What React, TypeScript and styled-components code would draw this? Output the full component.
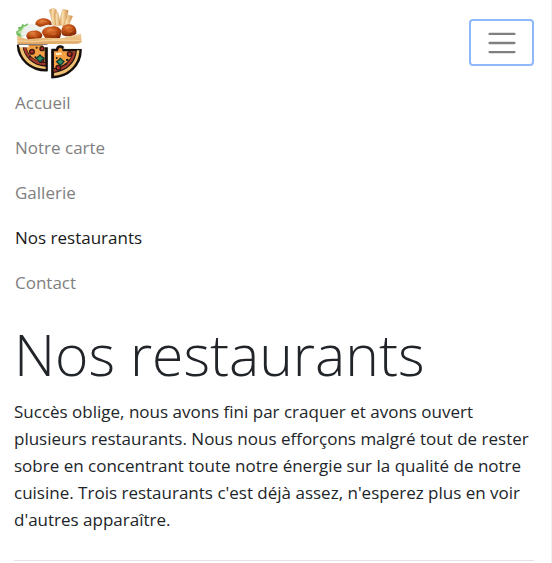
import React, { useState } from "react";
import styled, { createGlobalStyle } from "styled-components";

const GlobalStyle = createGlobalStyle`
  *, *::before, *::after { box-sizing: border-box; }
  body {
    margin: 0;
    background: #fff;
    color: #212529;
    font-family: "Segoe UI", "Open Sans", sans-serif;
    font-size: 17px;
    font-weight: 400;
    line-height: 27px;
  }
`;

const Page = styled.div`
  min-height: 100vh;
  border-right: 1px solid #f0f0f0;
`;

const Navbar = styled.nav`
  display: flex;
  flex-wrap: wrap;
  align-items: flex-start;
  justify-content: space-between;
  padding: 8px 17px 9px 15px;
`;

const Brand = styled.a`
  display: block;
  height: 72px;
`;

const Toggler = styled.button`
  display: flex;
  align-items: center;
  justify-content: center;
  width: 65px;
  height: 47px;
  margin-top: 11px;
  padding: 0;
  background: transparent;
  border: 2px solid #8fb8fa;
  border-radius: 4px;
  cursor: pointer;
`;

const Menu = styled.ul`
  flex-basis: 100%;
  margin: 0;
  padding: 0;
  list-style: none;
`;

const MenuLink = styled.a<{ $active?: boolean }>`
  display: block;
  padding: 9px 0;
  color: ${(p) => (p.$active ? "#191919" : "#808080")};
  text-decoration: none;
`;

const Content = styled.main`
  padding: 0 17px 0 14px;
`;

const Title = styled.h1`
  margin: 0 0 3px;
  font-size: 57px;
  font-weight: 300;
  line-height: 81px;
`;

const Lead = styled.p`
  margin: 0;
`;

const Divider = styled.hr`
  margin: 27px 0;
  border: 0;
  border-top: 1px solid #e3e3e3;
`;

const links = ["Accueil", "Notre carte", "Gallerie", "Nos restaurants", "Contact"];

const Logo = () => (
  <svg width="70" height="72" viewBox="21 25 210 216" role="img" aria-label="Accueil">
    <defs>
      <radialGradient id="ball" cx=".4" cy=".3" r=".75">
        <stop offset="0" stopColor="#e27a38" />
        <stop offset=".55" stopColor="#b9480f" />
        <stop offset="1" stopColor="#742407" />
      </radialGradient>
      <linearGradient id="stick" x1="0" x2="1">
        <stop offset="0" stopColor="#d9974f" />
        <stop offset=".4" stopColor="#f8dfae" />
        <stop offset="1" stopColor="#cf8b43" />
      </linearGradient>
      <linearGradient id="tray" x1="0" x2="0" y1="0" y2="1">
        <stop offset="0" stopColor="#f3d199" />
        <stop offset="1" stopColor="#dfa461" />
      </linearGradient>
    </defs>
    <g fill="url(#stick)" stroke="#d19a5c" strokeWidth="1">
      <path d="M124 30l12-4 9 4 4 45-14 3z" />
      <path d="M163 29l18 3-9 47-20-3z" />
      <path d="M138 42l12-4 8 38-14 3z" />
      <path d="M180 47l14 2-15 36-16-3z" />
    </g>
    <path d="M24 96l8-5-2-9 10-1 2-8 8 3 9-5 3 9 7 3-7 24-29 5-7-7z" fill="#73bd63" />
    <path d="M29 98l10-7 10-13 8 5-9 12-5 12z" fill="#c0e7a9" />
    <path d="M82 78c-2-15 12-22 26-22 14 1 23 9 23 18l-9 11-30 2z" fill="url(#ball)" />
    <path d="M38 108c5-21 17-36 35-36 12 0 16 10 25 9 12-1 17-8 28-5 12 2 15 12 12 20l-39 15z" fill="#eef0ed" />
    <path d="M160 94c1-14 12-21 25-20 15 1 22 14 20 27-4 9-32 12-42 5z" fill="url(#ball)" />
    <path d="M102 100c-1-12 13-20 27-19 14-5 32 4 32 17l-5 17-42 4z" fill="url(#ball)" />
    <path d="M55 111c-1-13 12-19 24-18 12-2 23 6 24 15l-5 11-37 3z" fill="url(#ball)" />
    <g fill="none" stroke="#eea061" strokeWidth="2" opacity=".65">
      <path d="M66 101l8-3 7 4M119 94l10-5 9 5 8-2M173 84l12-3 8 7M96 66l11-3 9 4M76 108l10 3M132 105l13-4M181 98l12-4" />
    </g>
    <g fill="none" stroke="#793006" strokeWidth="2" opacity=".6">
      <path d="M61 111l9 5 12-4M112 104l11 6 15-2M169 95l10 6 15-1M91 74l10 3 12-5" />
    </g>
    <path d="M27 108l31 11 50-5 52 2 59-14 2 26-11 4-181 2z" fill="url(#tray)" />
    <path d="M29 124l48 2 60-5 81 1" fill="none" stroke="#f8dca7" strokeWidth="4" opacity=".65" />

    <path d="M29 137H117V213C70 214 30 180 29 137Z" fill="#221511" stroke="#130e0c" strokeWidth="5" strokeLinejoin="round" />
    <path d="M34 137C36 177 68 207 113 208V201C75 199 47 174 43 137Z" fill="#efc170" />
    <path d="M45 137C49 172 77 196 112 197V190C80 188 56 168 52 137Z" fill="#a6372a" />
    <path d="M54 137H110V187C79 187 57 165 54 137Z" fill="#f6a044" />
    <path d="M132 150H146C148 136 166 136 168 150H219C219 197 181 233 132 234Z" fill="#221511" stroke="#130e0c" strokeWidth="5" strokeLinejoin="round" />
    <path d="M138 228C180 227 213 194 214 152H207C204 190 176 216 138 220Z" fill="#efc170" />
    <path d="M137 216C173 213 200 188 203 154H196C192 184 171 204 137 209Z" fill="#a6372a" />
    <path d="M138 155H150C151 141 163 140 164 155H194C190 182 168 201 138 205Z" fill="#f6a044" />
    <path d="M32 136H62V143H35ZM104 136H120V143H107ZM166 144L193 137H221V147H166Z" fill="white" />
    <g fill="#ad2e28" stroke="#351511" strokeWidth="4">
      <circle cx="72" cy="156" r="7" />
      <circle cx="102" cy="147" r="6" />
      <circle cx="100" cy="181" r="7" />
      <circle cx="185" cy="163" r="7" />
      <circle cx="151" cy="204" r="7" />
    </g>
    <path d="M96 166l5 5 7 5-7 6-5 6-5-6-7-6 7-5zM157 176l5 5 6 5-6 6-5 5-5-5-6-6 6-5z" fill="#299066" stroke="#133c31" strokeWidth="4" />
    <g fill="#201e16">
      <circle cx="82" cy="173" r="3" /><circle cx="86" cy="144" r="3" /><circle cx="66" cy="171" r="3" />
      <circle cx="146" cy="175" r="3" /><circle cx="178" cy="181" r="4" /><circle cx="173" cy="194" r="3" />
    </g>
    <path d="M143 162l7 2 5-3 6 3" fill="none" stroke="#fff4d8" strokeWidth="5" />
  </svg>
);

export default function App() {
  const [open, setOpen] = useState(true);
  return (
    <Page>
      <GlobalStyle />
      <Navbar>
        <Brand href="#"><Logo /></Brand>
        <Toggler type="button" aria-label="Menu" aria-expanded={open} aria-controls="menu" onClick={() => setOpen(!open)}>
          <svg width="34" height="34" viewBox="0 0 30 30" aria-hidden="true">
            <path d="M4 7h22M4 15h22M4 23h22" stroke="#808080" strokeWidth="2" strokeLinecap="round" />
          </svg>
        </Toggler>
        {open && (
          <Menu id="menu">
            {links.map((label) => (
              <li key={label}>
                <MenuLink href="#" $active={label === "Nos restaurants"} aria-current={label === "Nos restaurants" ? "page" : undefined}>{label}</MenuLink>
              </li>
            ))}
          </Menu>
        )}
      </Navbar>
      <Content>
        <Title>Nos restaurants</Title>
        <Lead>
          Succès oblige, nous avons fini par craquer et avons ouvert plusieurs restaurants. Nous nous
          efforçons malgré tout de rester sobre en concentrant toute notre énergie sur la qualité de
          notre cuisine. Trois restaurants c'est déjà assez, n'esperez plus en voir d'autres apparaître.
        </Lead>
        <Divider />
      </Content>
    </Page>
  );
}
